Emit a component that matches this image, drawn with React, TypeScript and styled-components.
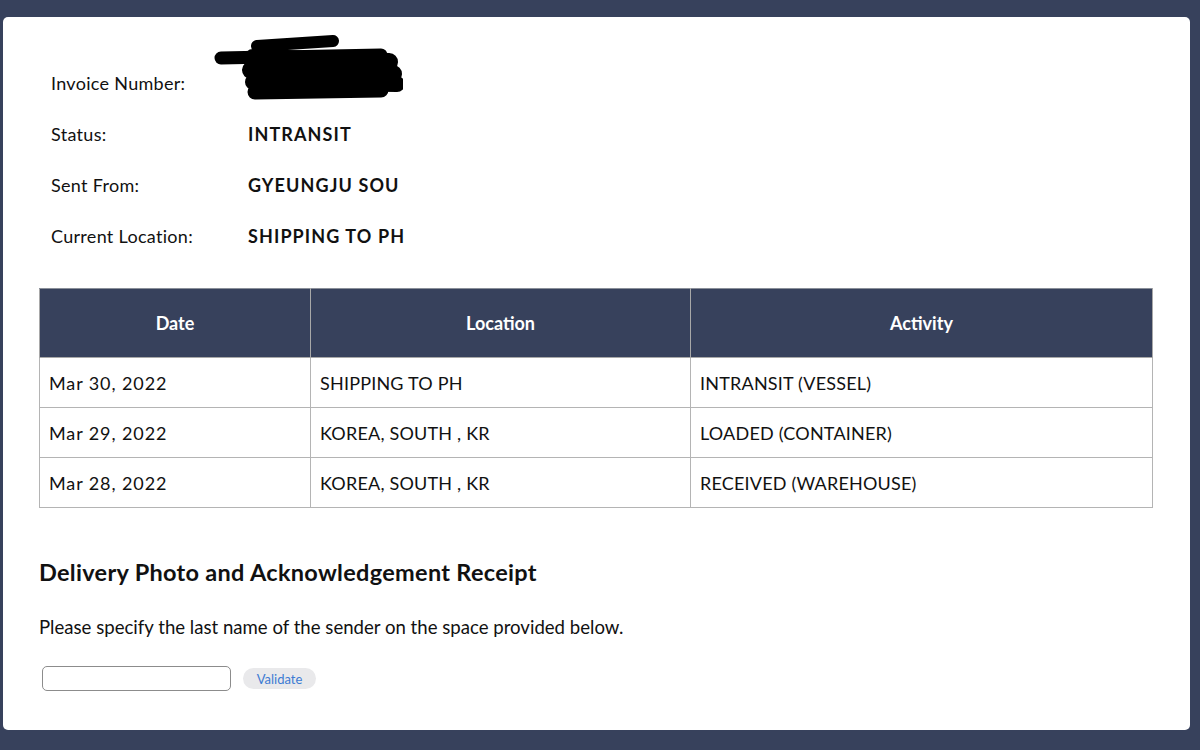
import React from "react";
import styled, { createGlobalStyle } from "styled-components";

const navy = "#37415c";

const GlobalStyle = createGlobalStyle`
  html, body {
    margin: 0;
    padding: 0;
    background: ${navy};
    font-family: Lato, "Noto Sans", "Liberation Sans", sans-serif;
    color: #111;
  }
`;

interface TrackingRow {
  date: string;
  location: string;
  activity: string;
}

const rows: TrackingRow[] = [
  { date: "Mar 30, 2022", location: "SHIPPING TO PH", activity: "INTRANSIT (VESSEL)" },
  { date: "Mar 29, 2022", location: "KOREA, SOUTH , KR", activity: "LOADED (CONTAINER)" },
  { date: "Mar 28, 2022", location: "KOREA, SOUTH , KR", activity: "RECEIVED (WAREHOUSE)" },
];

const Page = styled.div`
  width: 1200px;
  height: 750px;
  padding: 17px 0 0 3px;
  box-sizing: border-box;
`;

const Card = styled.div`
  width: 1187px;
  height: 713px;
  background: #fff;
  border-radius: 5px;
  box-sizing: border-box;
  padding: 40px 0 0 36px;
`;

const InfoGrid = styled.div`
  display: grid;
  grid-template-columns: 197px auto;
  grid-auto-rows: 51px;
  align-items: center;
  margin-left: 12px;
  font-size: 18px;
`;

const Label = styled.div`
  font-weight: 400;
  letter-spacing: 0.3px;
`;

const Value = styled.div`
  position: relative;
  font-weight: 700;
  letter-spacing: 1.1px;
`;

const Redaction = styled.svg`
  position: absolute;
  left: -35px;
  top: -49px;
`;

const Table = styled.table`
  margin-top: 27px;
  width: 1114px;
  border-collapse: collapse;
  table-layout: fixed;
  font-size: 18px;
`;

const Th = styled.th<{ $w: number }>`
  width: ${(p) => p.$w}px;
  height: 68px;
  padding: 0;
  background: ${navy};
  color: #fff;
  font-weight: 700;
  text-align: center;
  border: 1px solid #a8a8a8;
  border-top-color: #8a8f99;
`;

const Td = styled.td`
  height: 49px;
  padding: 0 0 0 9px;
  border: 1px solid #b4b4b4;
  text-align: left;
  letter-spacing: 0.2px;
`;

const DateText = styled.span`
  letter-spacing: 0.9px;
`;

const Heading = styled.h2`
  margin: 50px 0 0;
  font-size: 23.5px;
  line-height: 28px;
  font-weight: 700;
  letter-spacing: 0.3px;
`;

const Paragraph = styled.p`
  margin: 30px 0 0;
  font-size: 18.6px;
  line-height: 22px;
`;

const Form = styled.div`
  display: flex;
  align-items: center;
  gap: 12px;
  margin: 28px 0 0 3px;
`;

const TextInput = styled.input`
  width: 189px;
  height: 25px;
  box-sizing: border-box;
  border: 1px solid #8c8c8c;
  border-radius: 5px;
  background: #fff;
`;

const Button = styled.button`
  width: 73px;
  height: 21px;
  padding: 0;
  border: none;
  border-radius: 11px;
  background: #e9e9eb;
  color: #3d7bd3;
  font-family: inherit;
  font-size: 13px;
  cursor: pointer;
`;

const ScribbleMark = () => (
  <Redaction width="190" height="72" viewBox="0 0 190 72">
    <g stroke="#000" strokeLinecap="round" fill="none">
      <path d="M8 24 L168 21" strokeWidth="13" />
      <path d="M44 12 L120 7" strokeWidth="12" />
      <path d="M40 24 L176 28" strokeWidth="18" />
      <path d="M38 36 L180 40" strokeWidth="18" />
      <path d="M40 48 L184 50" strokeWidth="16" />
      <path d="M42 58 L168 56" strokeWidth="15" />
    </g>
  </Redaction>
);

const App: React.FC = () => {
  return (
    <Page>
      <GlobalStyle />
      <Card>
        <InfoGrid>
          <Label>Invoice Number:</Label>
          <Value>
            <ScribbleMark />
          </Value>
          <Label>Status:</Label>
          <Value>INTRANSIT</Value>
          <Label>Sent From:</Label>
          <Value>GYEUNGJU SOU</Value>
          <Label>Current Location:</Label>
          <Value>SHIPPING TO PH</Value>
        </InfoGrid>

        <Table>
          <thead>
            <tr>
              <Th $w={270}>Date</Th>
              <Th $w={379}>Location</Th>
              <Th $w={461}>Activity</Th>
            </tr>
          </thead>
          <tbody>
            {rows.map((r) => (
              <tr key={r.date}>
                <Td>
                  <DateText>{r.date}</DateText>
                </Td>
                <Td>{r.location}</Td>
                <Td>{r.activity}</Td>
              </tr>
            ))}
          </tbody>
        </Table>

        <Heading>Delivery Photo and Acknowledgement Receipt</Heading>
        <Paragraph>
          Please specify the last name of the sender on the space provided below.
        </Paragraph>

        <Form>
          <TextInput type="text" />
          <Button>Validate</Button>
        </Form>
      </Card>
    </Page>
  );
};

export default App;
